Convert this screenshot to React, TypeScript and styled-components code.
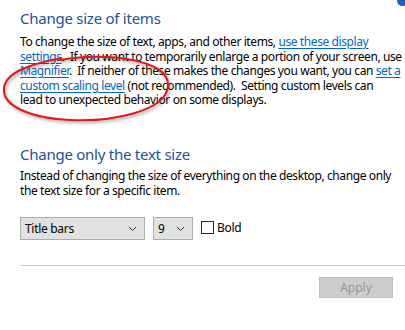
import React from "react";
import styled, { createGlobalStyle } from "styled-components";

const Global = createGlobalStyle`
  html, body { margin: 0; padding: 0; background: #fff; }
  body { font-family: "Noto Sans", "Open Sans", sans-serif; width: 405px; height: 330px; overflow: hidden; }
`;

const Page = styled.div`
  position: relative;
  width: 405px;
  height: 330px;
  padding: 0 0 0 20px;
  box-sizing: border-box;
  overflow: hidden;
`;

const Heading = styled.h2<{ $top: number }>`
  margin: ${(p) => p.$top}px 0 0 0;
  font-weight: 400;
  font-size: 15px;
  letter-spacing: -0.25px;
  line-height: 20px;
  color: #1e50a2;
  white-space: nowrap;
`;

const Para = styled.p<{ $top: number }>`
  margin: ${(p) => p.$top}px 0 0 0;
  font-size: 12px;
  letter-spacing: -0.4px;
  line-height: 14.6px;
  color: #000;
  white-space: nowrap;
`;

const Link = styled.a`
  color: #0066cc;
  text-decoration: underline;
  text-underline-offset: 2px;
`;

const Controls = styled.div`
  display: flex;
  align-items: center;
  gap: 8px;
  margin-top: 19px;
  height: 23px;
`;

const Select = styled.div<{ $w: number }>`
  width: ${(p) => p.$w}px;
  height: 23px;
  box-sizing: border-box;
  border: 1px solid #adadad;
  background: #e1e1e1;
  display: flex;
  align-items: center;
  justify-content: space-between;
  padding: 0 7px 0 4px;
  font-size: 12px;
  letter-spacing: -0.3px;
  color: #000;
`;

const CheckRow = styled.label`
  display: flex;
  align-items: center;
  gap: 3px;
  font-size: 12px;
  letter-spacing: -0.3px;
  color: #000;
  margin-top: -3px;
`;

const Box = styled.span`
  width: 13px;
  height: 13px;
  box-sizing: border-box;
  border: 1px solid #2a2040;
  background: #fff;
`;

const Rule = styled.div`
  height: 1px;
  background: #cccccc;
  margin-top: 25px;
`;

const Footer = styled.div`
  display: flex;
  justify-content: flex-end;
  padding-right: 12px;
  margin-top: 11px;
`;

const Apply = styled.button`
  width: 74px;
  height: 21px;
  box-sizing: border-box;
  border: 1px solid #bfbfbf;
  background: #cccccc;
  color: #9a90a6;
  font-family: inherit;
  font-size: 12px;
  padding: 0;
`;

const Annotation = styled.svg`
  position: absolute;
  left: 0;
  top: 50px;
  overflow: visible;
  pointer-events: none;
`;

const Dot = styled.div`
  position: absolute;
  right: -3px;
  top: -5px;
  width: 11px;
  height: 11px;
  border-radius: 50%;
  background: #1f5fbf;
`;

const Chevron = () => (
  <svg width="9" height="6" viewBox="0 0 9 6">
    <path d="M1 1 L4.5 4.5 L8 1" fill="none" stroke="#333" strokeWidth="1" />
  </svg>
);

export default function App() {
  return (
    <>
      <Global />
      <Page>
        <Heading $top={8}>Change size of items</Heading>
        <Para $top={7}>
          To change the size of text, apps, and other items, <Link>use these display</Link>
          <br />
          <Link>settings</Link>.&nbsp; If you want to temporarily enlarge a portion of your screen, use
          <br />
          <Link>Magnifier</Link>.&nbsp; If neither of these makes the changes you want, you can <Link>set a</Link>
          <br />
          <Link>custom scaling level</Link> (not recommended).&nbsp; Setting custom levels can
          <br />
          lead to unexpected behavior on some displays.
        </Para>
        <Heading $top={36}>Change only the text size</Heading>
        <Para $top={5}>
          Instead of changing the size of everything on the desktop, change only
          <br />
          the text size for a specific item.
        </Para>
        <Controls>
          <Select $w={125}>
            <span>Title bars</span>
            <Chevron />
          </Select>
          <Select $w={40}>
            <span>9</span>
            <Chevron />
          </Select>
          <CheckRow>
            <Box />
            <span>Bold</span>
          </CheckRow>
        </Controls>
        <Rule />
        <Footer>
          <Apply>Apply</Apply>
        </Footer>
        <Annotation width="180" height="80" viewBox="0 0 180 80">
          <defs>
            <filter id="sh" x="-10%" y="-20%" width="130%" height="150%">
              <feDropShadow dx="1.5" dy="2" stdDeviation="1.5" floodColor="#000" floodOpacity="0.35" />
            </filter>
          </defs>
          <path
            d="M60 10 C 110 2, 170 10, 168 36 C 166 62, 110 72, 70 70 C 30 68, 2 56, 4 38 C 6 22, 30 14, 62 8"
            fill="none"
            stroke="#e8141a"
            strokeWidth="2"
            filter="url(#sh)"
          />
        </Annotation>
        <Dot />
      </Page>
    </>
  );
}
